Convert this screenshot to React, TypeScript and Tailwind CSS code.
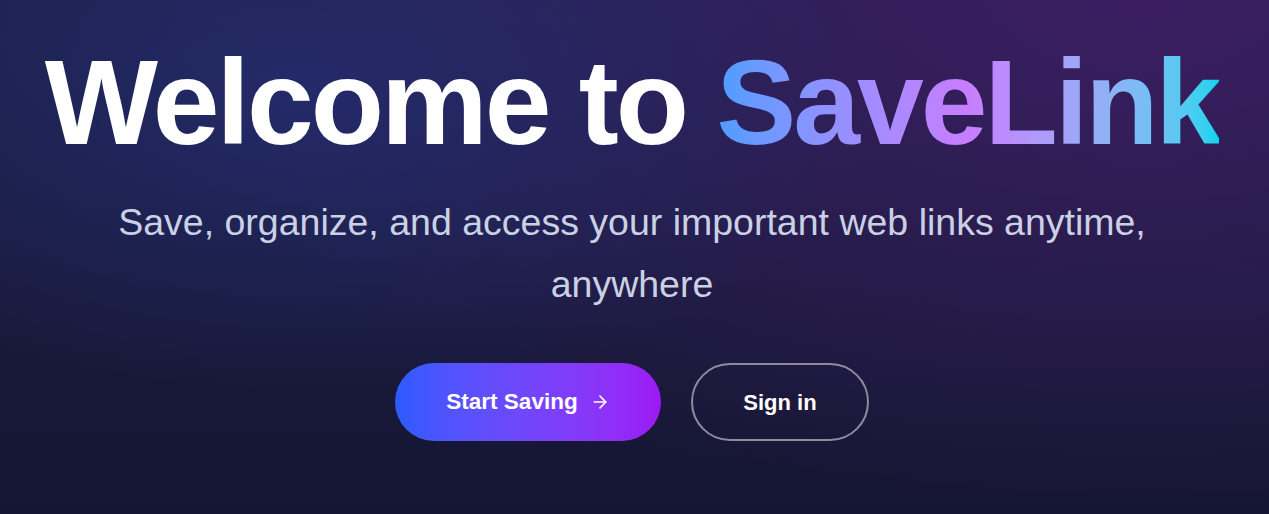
import * as React from "react";

function ArrowRight() {
  return (
    <svg width="20" height="20" viewBox="0 0 24 24" fill="none" stroke="currentColor" strokeWidth="2" strokeLinecap="round" strokeLinejoin="round">
      <path d="M5 12h14" />
      <path d="m12 5 7 7-7 7" />
    </svg>
  );
}

export default function App() {
  return (
    <div className="h-[514px] w-full overflow-hidden bg-[#161834] bg-[radial-gradient(ellipse_45%_60%_at_24%_18%,rgba(36,48,118,0.7),transparent),radial-gradient(ellipse_80%_100%_at_90%_0%,rgba(64,30,102,0.85),transparent),linear-gradient(to_bottom,#1e1f48,#151632)] font-['Liberation_Sans',Arial,sans-serif]">
      <div className="flex flex-col items-center pr-[5px] pt-[42px] text-center">
        <h1 className="text-[120px] font-bold leading-none tracking-tight text-white">
          Welcome to{" "}
          <span className="bg-gradient-to-r from-[#4c9dff] via-[#c77dff] to-[#00d4ef] bg-clip-text text-transparent">
            SaveLink
          </span>
        </h1>
        <p className="mt-[29px] max-w-[1080px] text-[37.5px] leading-[62px] text-[#cbd1e4]">
          Save, organize, and access your important web links anytime, anywhere
        </p>
        <div className="mt-[48px] flex items-center gap-[30px]">
          <button className="flex h-[78px] w-[266px] items-center justify-center gap-[12px] rounded-full bg-gradient-to-r from-[#2a5bff] to-[#9d17f5] text-[22.5px] font-bold text-white">
            Start Saving
            <ArrowRight />
          </button>
          <button className="flex h-[78px] w-[178px] items-center justify-center rounded-full border-2 border-[#8e8b9f] text-[22px] font-bold text-white">
            Sign in
          </button>
        </div>
      </div>
    </div>
  );
}
